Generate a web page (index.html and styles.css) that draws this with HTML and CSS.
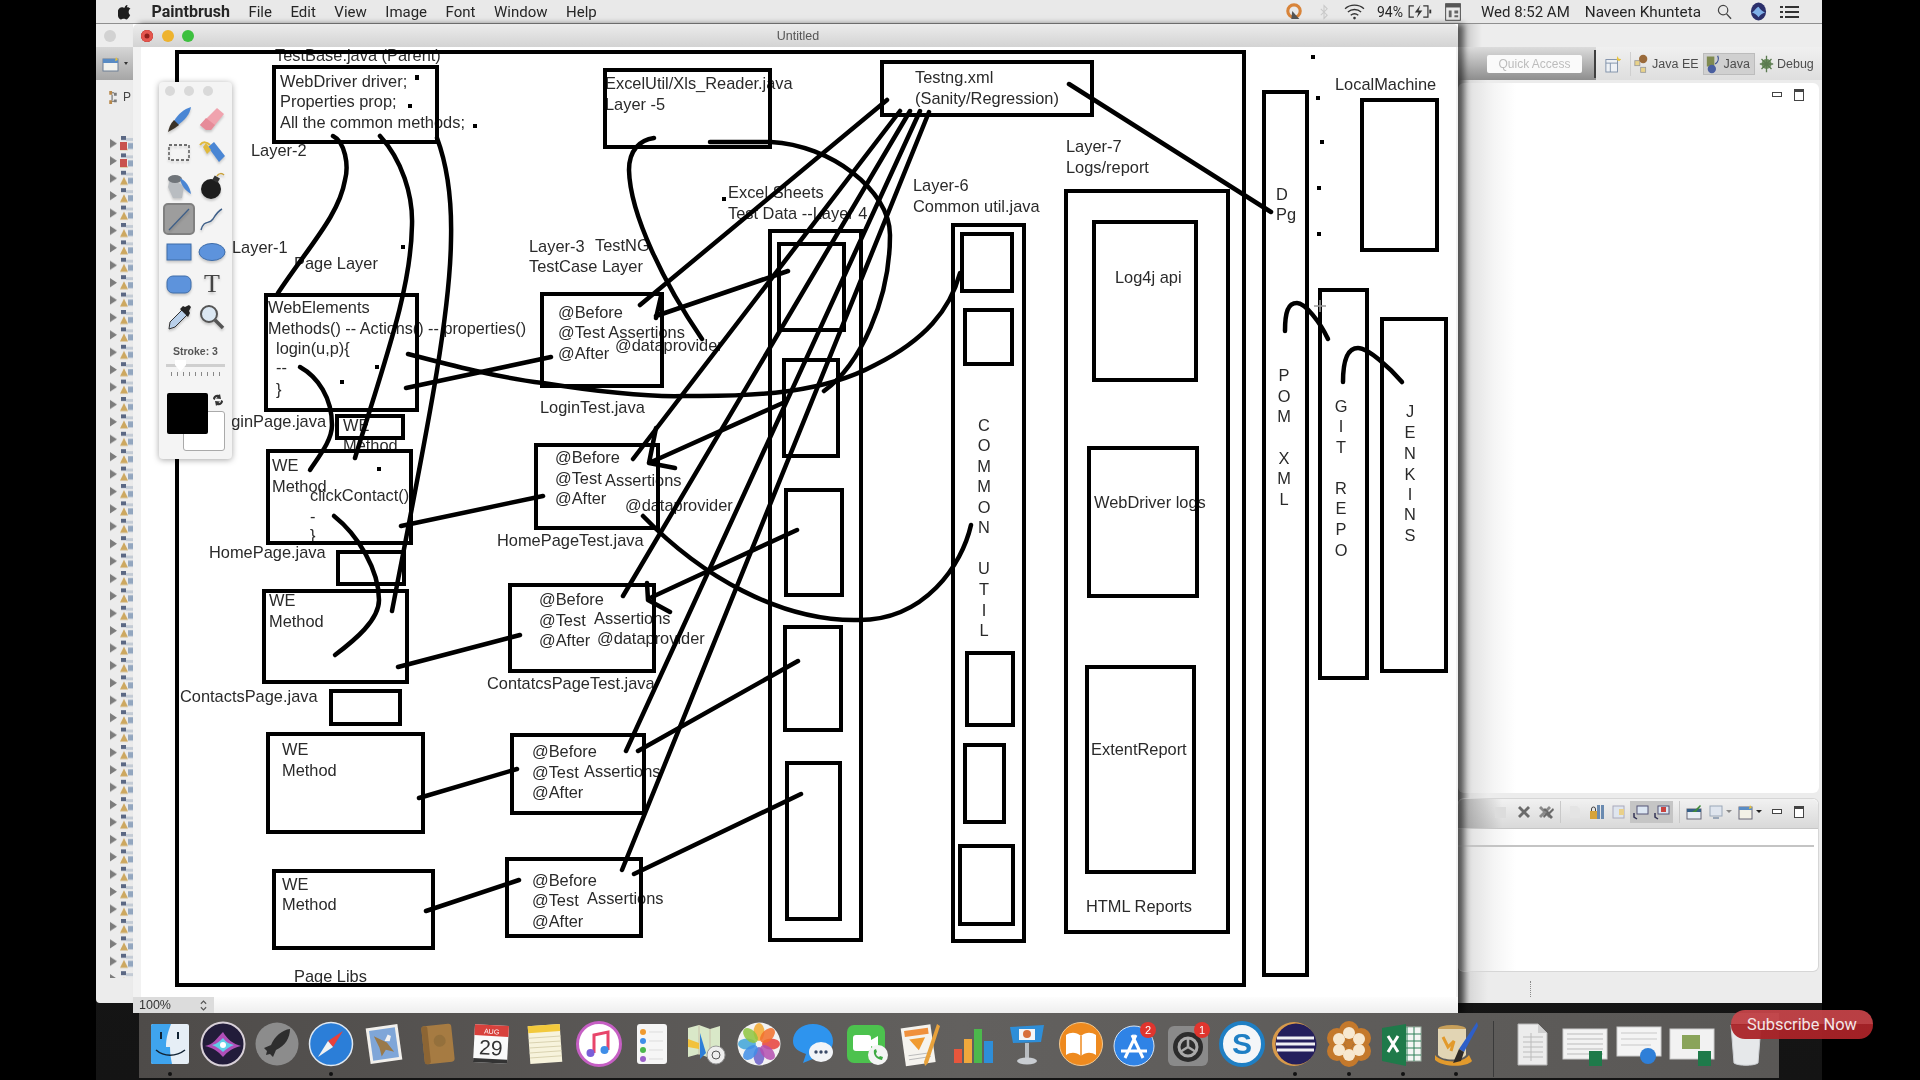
FILE: index.html
```html
<!DOCTYPE html>
<html lang="en">

<head>
    <meta charset="UTF-8">
    <title>Paintbrush - Untitled</title>
    <link rel="stylesheet" href="styles.css">
</head>

<body>
    <div class="screen">
        <!-- menu bar -->
        <header class="menubar">
            <svg class="apple" viewBox="0 0 16 19"><path d="M11.6 1c.1 1.2-.4 2.200-1 3-.7.800-1.700 1.400-2.700 1.300C7.700 4.200 8.300 3 8.900 2.300 9.600 1.600 10.700 1 11.600 1zM15 13.300c-.5 1.100-.7 1.600-1.300 2.500-.9 1.300-2 2.900-3.400 2.900-1.300 0-1.600-.8-3.300-.8s-2.100.8-3.300.8c-1.400 0-2.500-1.500-3.300-2.800C-.5 12.400-.7 8.300 .7 6.100 1.700 4.600 3.200 3.700 4.600 3.700c1.500 0 2.400.8 3.600.8s1.900-.8 3.600-.8c1.300 0 2.600.7 3.500 1.900-3.100 1.700-2.600 6.200-.3 7.700z"/></svg>
            <strong class="menu-app">Paintbrush</strong>
            <span>File</span>
            <span>Edit</span>
            <span>View</span>
            <span>Image</span>
            <span>Font</span>
            <span>Window</span>
            <span>Help</span>
            <div class="menu-right">
                <svg class="st st-cast" viewBox="0 0 18 20"><circle cx="9" cy="9" r="7" fill="none" stroke="#d8843a" stroke-width="3.500"/><path d="M7 9l8 9H6z" fill="#555"/></svg>
                <svg class="st st-bt" viewBox="0 0 10 20"><path d="M1 6l8 8-4 4V2l4 4-8 8" fill="none" stroke="#c9c9c9" stroke-width="1.300"/></svg>
                <svg class="st st-wifi" viewBox="0 0 22 18"><g fill="none" stroke="#333" stroke-width="1.400"><path d="M1 6c5.500-5 14.500-5 20 0"/><path d="M4 9.500c4-3.500 10-3.500 14 0"/><path d="M7 13c2.500-2 5.500-2 8 0"/></g><circle cx="11" cy="16" r="1.400" fill="#333"/></svg>
                <span class="st-pct">94%</span>
                <svg class="st st-batt" viewBox="0 0 26 16"><path d="M7 2H2v12h5M17 2h5v12h-5" fill="none" stroke="#333" stroke-width="1.300"/><path d="M23.500 6h2v4h-2z" fill="#333"/><path d="M14 1L8 9h4l-2 6 6-8h-4z" fill="#333"/></svg>
                <svg class="st st-cal" viewBox="0 0 17 19"><rect x=".7" y=".7" width="15.600" height="17.600" fill="none" stroke="#444"/><rect x=".7" y=".7" width="15.600" height="4" fill="#555"/><path d="M4 8h3v7H4zM10 8h4v3h-4zM10 13h4v2h-4z" fill="#666"/></svg>
                <span class="st-clock">Wed 8:52 AM</span>
                <span class="st-user">Naveen Khunteta</span>
                <svg class="st st-search" viewBox="0 0 16 17"><circle cx="6.500" cy="6.500" r="5" fill="none" stroke="#444" stroke-width="1.300"/><path d="M10.200 10.500L15 15.800" stroke="#444" stroke-width="1.500"/></svg>
                <svg class="st st-siri" viewBox="0 0 18 20"><ellipse cx="9" cy="10" rx="8" ry="9.500" fill="#2b2f6b"/><path d="M2 11c3-1 4-5 7-6 2 3 4 5 7 6-3 1-5 2-7 5-2-3-4-4-7-5z" fill="#7fb0e8"/></svg>
                <svg class="st st-list" viewBox="0 0 19 14"><g fill="#333"><rect y="1" width="3" height="2"/><rect y="6" width="3" height="2"/><rect y="11" width="3" height="2"/><rect x="5" y="1" width="14" height="2"/><rect x="5" y="6" width="14" height="2"/><rect x="5" y="11" width="14" height="2"/></g></svg>
            </div>
        </header>

        <!-- eclipse window behind -->
        <section class="eclipse">
            <div class="ec-left">
                <div class="ec-strip"><i class="ec-light"></i></div>
                <div class="ec-tools">
                    <svg class="ec-new" viewBox="0 0 20 16"><rect x="1" y="3" width="15" height="12" fill="#f3f3ee" stroke="#6d7f96"/><rect x="1" y="3" width="15" height="4" fill="#5a8cc4"/><path d="M14 1l2 3-3 1z" fill="#e8c33c"/></svg>
                    <i class="ec-new-caret"></i>
                </div>
                <div class="ec-tree">
                    <div class="ec-tree-head">
                        <svg viewBox="0 0 10 16" class="ec-pkg"><path d="M1 1h3v4H1zM1 11h3v4H1z" fill="#b8884a"/><path d="M6 3h3v3H6zM6 10h3v3H6z" fill="#7a7a7a"/><path d="M4 3h2M4 12h2M4 5v6" stroke="#555"/></svg>
                        <span>P</span>
                    </div>
                    <svg class="ec-rows" viewBox="0 0 37 842">
                        <defs>
                            <pattern id="treeRow" width="37" height="17.400" patternUnits="userSpaceOnUse">
                                <path d="M14 3l7 4.500-7 4.500z" fill="#7c7c7c"/>
                                <rect x="25" y="0" width="5" height="4" fill="#5b6884"/>
                                <rect x="30" y="2" width="7" height="3" fill="#c4ccd6"/>
                                <path d="M28 6l4 8h-8z" fill="#cda860"/>
                                <rect x="32" y="7" width="5" height="6" fill="#93a7c0"/>
                            </pattern>
                        </defs>
                        <rect width="37" height="842" fill="url(#treeRow)"/>
                        <rect x="24" y="6" width="7" height="8" fill="#c9524e"/>
                        <rect x="24" y="23" width="7" height="8" fill="#c9524e"/>
                    </svg>
                </div>
            </div>
            <div class="ec-right">
                <div class="ec-strip"></div>
                <div class="ec-tools ec-tools-right">
                    <div class="ec-quick">Quick Access</div>
                    <i class="ec-grip"></i>
                    <svg class="ec-ico" viewBox="0 0 18 20"><rect x="1" y="5" width="13" height="14" fill="#eef1f5" stroke="#7a8ca6"/><path d="M1 9h13M6 9v10" stroke="#7a8ca6"/><path d="M14 1l1.500 3 3 .5-2.500 2-3-1z" fill="#e8c33c"/></svg>
                    <i class="ec-sep"></i>
                    <div class="ec-persp">
                        <svg viewBox="0 0 18 24"><rect x="1" y="8" width="6" height="6" fill="#e8d28a" stroke="#999"/><rect x="8" y="16" width="6" height="6" fill="#e8d28a" stroke="#999"/><circle cx="11" cy="6" r="5" fill="#9a6a3a"/></svg>
                        <span>Java EE</span>
                    </div>
                    <div class="ec-persp ec-persp-on">
                        <svg viewBox="0 0 18 24"><rect x="1" y="3" width="9" height="12" fill="#7f8a50"/><circle cx="7" cy="18" r="5" fill="#4a5fa0"/><path d="M14 2c2 4 0 8-3 10" fill="none" stroke="#3a4f90" stroke-width="1.500"/></svg>
                        <span>Java</span>
                    </div>
                    <div class="ec-persp ec-persp-last">
                        <svg viewBox="0 0 18 24"><circle cx="9" cy="12" r="6" fill="#6b8f5e"/><path d="M9 2v20M1 12h16M3 6l12 12M15 6L3 18" stroke="#5b7a50" stroke-width="1.600"/></svg>
                        <span>Debug</span>
                    </div>
                </div>
                <div class="ec-panel ec-panel-top">
                    <div class="ec-winbtns">
                        <svg viewBox="0 0 10 6"><rect x=".5" y=".5" width="9" height="4" fill="#fff" stroke="#444"/></svg>
                        <svg viewBox="0 0 10 12"><rect x=".5" y=".5" width="9" height="11" fill="#fff" stroke="#444"/><rect x=".5" y=".5" width="9" height="2.500" fill="#444"/></svg>
                    </div>
                </div>
                <div class="ec-panel ec-panel-bottom">
                    <div class="ec-bar">
                        <i class="bar-ico bar-stop"></i>
                        <svg class="bar-ico" viewBox="0 0 16 16"><path d="M2 4l2-2 4 4 4-4 2 2-4 4 4 4-2 2-4-4-4 4-2-2 4-4z" fill="#6a6a6a"/></svg>
                        <svg class="bar-ico" viewBox="0 0 16 16"><path d="M1 4l2-2 4 4 4-4 2 2-4 4 4 4-2 2-4-4-4 4-2-2 4-4z" fill="#8a8a8a"/><path d="M5 6l2-2 4 4 4-4 1 2-4 4 3 3-2 2-4-4-3 3-1-2 4-4z" fill="#6a6a6a"/></svg>
                        <i class="bar-sep"></i>
                        <svg class="bar-ico" viewBox="0 0 16 16"><path d="M3 2h7l3 3v9H3z" fill="#e4e4e4"/></svg>
                        <svg class="bar-ico" viewBox="0 0 16 16"><rect x="8" y="1" width="3" height="14" fill="#6a8ab0"/><rect x="12" y="1" width="3" height="14" fill="#6a8ab0"/><rect x="1" y="7" width="7" height="8" fill="#d5a33b"/><path d="M2.500 7V5a2 2 0 014 0v2" fill="none" stroke="#444"/></svg>
                        <svg class="bar-ico" viewBox="0 0 16 16"><rect x="2" y="2" width="11" height="12" fill="#dfe5ee" stroke="#aab"/><path d="M8 5h5v6H8z" fill="#e9d08a"/></svg>
                        <div class="bar-on">
                            <svg class="bar-ico" viewBox="0 0 16 16"><rect x="4" y="2" width="11" height="8" fill="#dce6f2" stroke="#557"/><path d="M1 9v4l3 2" fill="none" stroke="#335" stroke-width="1.500"/></svg>
                            <svg class="bar-ico" viewBox="0 0 16 16"><rect x="4" y="2" width="11" height="8" fill="#dce6f2" stroke="#557"/><rect x="7" y="3" width="5" height="5" fill="#c9423e"/><path d="M1 9v4l3 2" fill="none" stroke="#335" stroke-width="1.500"/></svg>
                        </div>
                        <i class="bar-sep"></i>
                        <svg class="bar-ico" viewBox="0 0 16 16"><rect x="1" y="5" width="14" height="10" fill="#e8edf4" stroke="#667"/><rect x="1" y="5" width="14" height="3" fill="#345f88"/><path d="M6 8l3-2 5-5 1 1-5 6z" fill="#3f8a3a"/></svg>
                        <svg class="bar-ico" viewBox="0 0 16 16"><rect x="2" y="2" width="12" height="10" fill="#dfe5ee" stroke="#9aa7b8"/><rect x="5" y="13" width="6" height="2" fill="#9aa7b8"/></svg>
                        <i class="bar-caret"></i>
                        <svg class="bar-ico" viewBox="0 0 16 16"><rect x="1" y="3" width="13" height="12" fill="#f3f1e6" stroke="#667"/><rect x="1" y="3" width="13" height="3" fill="#5a8cc4"/><path d="M12 1l2 3-3 1z" fill="#e8c33c"/></svg>
                        <i class="bar-caret bar-caret-dark"></i>
                        <div class="ec-winbtns ec-winbtns-bar">
                            <svg viewBox="0 0 10 6"><rect x=".5" y=".5" width="9" height="4" fill="#fff" stroke="#444"/></svg>
                            <svg viewBox="0 0 10 12"><rect x=".5" y=".5" width="9" height="11" fill="#fff" stroke="#444"/><rect x=".5" y=".5" width="9" height="2.500" fill="#444"/></svg>
                        </div>
                    </div>
                    <div class="ec-bar-line"></div>
                </div>
                <div class="ec-status"><i class="ec-sash"></i></div>
            </div>
        </section>

        <!-- paintbrush window -->
        <section class="paint">
            <div class="paint-title">
                <i class="light light-red"></i>
                <i class="light light-yellow"></i>
                <i class="light light-green"></i>
                <span class="paint-name">Untitled</span>
            </div>
            <div class="paint-body">
                <svg class="diagram" viewBox="141 47 1315 950">
                    <g class="dg-txt">
                        <text x="275" y="61">TestBase.java (Parent)</text>
                        <text x="280" y="87">WebDriver driver;</text>
                        <text x="280" y="107">Properties prop;</text>
                        <text x="280" y="128">All the common methods;</text>
                        <text x="605" y="89">ExcelUtil/Xls_Reader.java</text>
                        <text x="605" y="110">Layer -5</text>
                        <text x="915" y="83">Testng.xml</text>
                        <text x="915" y="104">(Sanity/Regression)</text>
                        <text x="251" y="156">Layer-2</text>
                        <text x="232" y="253">Layer-1</text>
                        <text x="294" y="269">Page Layer</text>
                        <text x="529" y="252">Layer-3</text>
                        <text x="595" y="251">TestNG</text>
                        <text x="529" y="272">TestCase Layer</text>
                        <text x="728" y="198">Excel Sheets</text>
                        <text x="728" y="219">Test Data --Layer 4</text>
                        <text x="913" y="191">Layer-6</text>
                        <text x="913" y="212">Common util.java</text>
                        <text x="1066" y="152">Layer-7</text>
                        <text x="1066" y="173">Logs/report</text>
                        <text x="1335" y="90">LocalMachine</text>

                        <text x="268" y="313">WebElements</text>
                        <text x="268" y="334" class="dg-tight">Methods() -- Actions() -- properties()</text>
                        <text x="276" y="354">login(u,p){</text>
                        <text x="276" y="373">--</text>
                        <text x="276" y="395">}</text>
                        <text x="213" y="427">LoginPage.java</text>
                        <text x="343" y="431">WE</text>
                        <text x="343" y="451">Method</text>
                        <text x="272" y="471">WE</text>
                        <text x="272" y="492">Method</text>
                        <text x="310" y="501">clickContact()</text>
                        <text x="310" y="522">-</text>
                        <text x="310" y="541">}</text>
                        <text x="209" y="558">HomePage.java</text>
                        <text x="269" y="606">WE</text>
                        <text x="269" y="627">Method</text>
                        <text x="180" y="702">ContactsPage.java</text>
                        <text x="282" y="755">WE</text>
                        <text x="282" y="776">Method</text>
                        <text x="282" y="890">WE</text>
                        <text x="282" y="910">Method</text>
                        <text x="294" y="982">Page Libs</text>

                        <text x="558" y="318">@Before</text>
                        <text x="558" y="338">@Test Assertions</text>
                        <text x="558" y="359">@After</text>
                        <text x="615" y="351">@dataprovider</text>
                        <text x="540" y="413">LoginTest.java</text>
                        <text x="555" y="463">@Before</text>
                        <text x="555" y="484">@Test</text>
                        <text x="605" y="486">Assertions</text>
                        <text x="555" y="504">@After</text>
                        <text x="625" y="511">@dataprovider</text>
                        <text x="497" y="546">HomePageTest.java</text>
                        <text x="539" y="605">@Before</text>
                        <text x="539" y="626">@Test</text>
                        <text x="594" y="624">Assertions</text>
                        <text x="539" y="646">@After</text>
                        <text x="597" y="644">@dataprovider</text>
                        <text x="487" y="689">ContatcsPageTest.java</text>
                        <text x="532" y="757">@Before</text>
                        <text x="532" y="778">@Test</text>
                        <text x="584" y="777">Assertions</text>
                        <text x="532" y="798">@After</text>
                        <text x="532" y="886">@Before</text>
                        <text x="532" y="906">@Test</text>
                        <text x="587" y="904">Assertions</text>
                        <text x="532" y="927">@After</text>

                        <text x="1115" y="283">Log4j api</text>
                        <text x="1094" y="508">WebDriver logs</text>
                        <text x="1091" y="755">ExtentReport</text>
                        <text x="1086" y="912">HTML Reports</text>
                        <text x="1276" y="200">D</text>
                        <text x="1276" y="220">Pg</text>
                    </g>
                    <g class="dg-txt dg-col">
                        <text x="984" y="431">C</text><text x="984" y="451">O</text><text x="984" y="472">M</text><text x="984" y="492">M</text><text x="984" y="513">O</text><text x="984" y="533">N</text>
                        <text x="984" y="574">U</text><text x="984" y="595">T</text><text x="984" y="616">I</text><text x="984" y="636">L</text>
                        <text x="1284" y="381">P</text><text x="1284" y="402">O</text><text x="1284" y="422">M</text><text x="1284" y="464">X</text><text x="1284" y="484">M</text><text x="1284" y="505">L</text>
                        <text x="1341" y="412">G</text><text x="1341" y="432">I</text><text x="1341" y="453">T</text><text x="1341" y="494">R</text><text x="1341" y="514">E</text><text x="1341" y="535">P</text><text x="1341" y="556">O</text>
                        <text x="1410" y="417">J</text><text x="1410" y="438">E</text><text x="1410" y="459">N</text><text x="1410" y="480">K</text><text x="1410" y="500">I</text><text x="1410" y="520">N</text><text x="1410" y="541">S</text>
                    </g>

                    <g class="dg-box">
                        <rect x="177" y="52" width="1067" height="933"/>
                        <rect x="274" y="67" width="163" height="75"/>
                        <rect x="605" y="70" width="165" height="77"/>
                        <rect x="882" y="62" width="210" height="53"/>
                        <rect x="542" y="294" width="120" height="92"/>
                        <rect x="536" y="445" width="122" height="83"/>
                        <rect x="510" y="585" width="144" height="86"/>
                        <rect x="512" y="735" width="132" height="78"/>
                        <rect x="507" y="859" width="134" height="77"/>
                        <rect x="266" y="295" width="151" height="115"/>
                        <rect x="337" y="416" width="66" height="22"/>
                        <rect x="268" y="451" width="143" height="92"/>
                        <rect x="338" y="552" width="66" height="32"/>
                        <rect x="264" y="591" width="143" height="91"/>
                        <rect x="331" y="691" width="69" height="33"/>
                        <rect x="268" y="734" width="155" height="98"/>
                        <rect x="274" y="871" width="159" height="77"/>
                        <rect x="770" y="231" width="91" height="709"/>
                        <rect x="779" y="244" width="65" height="86"/>
                        <rect x="784" y="360" width="54" height="96"/>
                        <rect x="786" y="490" width="56" height="105"/>
                        <rect x="785" y="627" width="56" height="103"/>
                        <rect x="787" y="763" width="53" height="156"/>
                        <rect x="953" y="225" width="71" height="716"/>
                        <rect x="962" y="234" width="50" height="57"/>
                        <rect x="965" y="310" width="47" height="54"/>
                        <rect x="967" y="653" width="46" height="72"/>
                        <rect x="965" y="745" width="39" height="77"/>
                        <rect x="960" y="846" width="53" height="78"/>
                        <rect x="1066" y="191" width="162" height="741"/>
                        <rect x="1094" y="222" width="102" height="158"/>
                        <rect x="1089" y="448" width="108" height="148"/>
                        <rect x="1087" y="667" width="107" height="205"/>
                        <rect x="1264" y="92" width="43" height="883"/>
                        <rect x="1362" y="100" width="75" height="150"/>
                        <rect x="1320" y="290" width="47" height="388"/>
                        <rect x="1382" y="319" width="64" height="352"/>
                    </g>

                    <g class="dg-line">
                        <!-- curves -->
                        <path d="M333 136C345 142 349 165 345 180C339 215 310 245 278 293"/>
                        <path d="M380 136C402 160 413 195 412 225C411 290 385 360 355 458"/>
                        <path d="M437 138C447 165 452 200 451 240C450 320 425 440 392 611"/>
                        <path d="M300 367C318 377 332 398 332 425C332 440 320 455 310 470"/>
                        <path d="M334 516C358 535 379 570 379 600C379 620 355 640 335 655"/>
                        <path d="M408 354C450 365 500 378 543 383C600 392 650 397 684 396C760 397 825 392 875 365C925 340 950 310 960 273"/>
                        <path d="M654 138C640 140 629 150 629 170C630 215 665 285 702 339"/>
                        <path d="M710 142L771 142C830 145 890 190 890 235C890 300 860 365 824 391"/>
                        <path d="M971 525C962 565 925 620 859 620C780 622 700 575 643 516"/>
                        <path d="M1285 331C1285 312 1288 303 1297 303C1305 303 1320 322 1328 339"/>
                        <path d="M1343 382C1343 360 1348 348 1358 348C1368 348 1390 368 1402 382"/>
                        <!-- testng fan -->
                        <path d="M887 100L640 305"/>
                        <path d="M900 111L633 459"/>
                        <path d="M910 111L623 596"/>
                        <path d="M920 111L626 751"/>
                        <path d="M929 112L622 870"/>
                        <path d="M1069 84L1271 212"/>
                        <!-- excel arrows -->
                        <path d="M788 271L656 316M661 296L656 318"/>
                        <path d="M785 402L649 463M656 428L649 463L675 468"/>
                        <path d="M797 530L652 597M647 583L648 600L670 612"/>
                        <path d="M798 661L638 751"/>
                        <path d="M801 794L634 874"/>
                        <!-- test to page -->
                        <path d="M406 388L551 357"/>
                        <path d="M401 526L543 496"/>
                        <path d="M398 667L520 635"/>
                        <path d="M419 798L517 769"/>
                        <path d="M426 911L519 880"/>
                    </g>

                    <g class="dg-dot">
                        <rect x="415" y="75" width="4" height="5"/>
                        <rect x="408" y="104" width="4" height="4"/>
                        <rect x="473" y="124" width="4" height="4"/>
                        <rect x="401" y="245" width="4" height="4"/>
                        <rect x="375" y="365" width="4" height="4"/>
                        <rect x="340" y="380" width="4" height="4"/>
                        <rect x="377" y="467" width="4" height="4"/>
                        <rect x="722" y="197" width="4" height="4"/>
                        <rect x="1311" y="55" width="4" height="4"/>
                        <rect x="1316" y="96" width="4" height="4"/>
                        <rect x="1320" y="140" width="4" height="4"/>
                        <rect x="1317" y="186" width="4" height="4"/>
                        <rect x="1317" y="232" width="4" height="4"/>
                    </g>
                    <path class="dg-cursor" d="M1320 300v12M1314 306h12"/>
                </svg>
            </div>
            <div class="paint-foot">
                <div class="zoom-box">100%
                    <svg viewBox="0 0 8 14"><path d="M1 5l3-3 3 3M1 9l3 3 3-3" fill="none" stroke="#555" stroke-width="1.300"/></svg>
                </div>
            </div>

            <!-- tool palette -->
            <aside class="palette">
                <div class="pal-lights"><i></i><i></i><i></i></div>
                <div class="pal-grid">
                    <svg class="tool" viewBox="0 0 28 28"><path d="M26 1c-1 7-6 13-13 18l-4-4C13 8 19 3 26 1z" fill="#4a86d4"/><path d="M9 14l5 5-4 3-7 4c1-4 2-8 6-12z" fill="#3a3228"/></svg>
                    <svg class="tool" viewBox="0 0 28 28"><path d="M19 2l7 6-13 16H8l-6-5z" fill="#f0a3ae"/><path d="M2 19l6 5h5l4-5-9-7z" fill="#e68b98"/></svg>
                    <svg class="tool" viewBox="0 0 28 28"><rect x="4" y="6" width="20" height="15" fill="none" stroke="#444" stroke-width="1.300" stroke-dasharray="3 2"/></svg>
                    <svg class="tool" viewBox="0 0 28 28"><path d="M10 8l6-5 11 14-6 6z" fill="#4a86d4"/><path d="M2 6c3-4 7-3 10 0" fill="none" stroke="#e0b93c" stroke-width="2"/><path d="M8 4l5 7-4 4-4-7z" fill="#e0b93c"/></svg>
                    <svg class="tool" viewBox="0 0 28 28"><path d="M5 6l14 8-2 12H8L3 15z" fill="#b9bdc1"/><ellipse cx="10" cy="7" rx="7" ry="4" fill="#70757a"/><path d="M15 6c6 3 10 9 11 16-5-3-10-8-11-16z" fill="#4a86d4"/></svg>
                    <svg class="tool" viewBox="0 0 28 28"><circle cx="13" cy="17" r="10" fill="#1d1d1d"/><rect x="15" y="4" width="6" height="5" transform="rotate(30 17 7)" fill="#333"/><path d="M19 4c2-3 5-3 7-1" fill="none" stroke="#c9a13a" stroke-width="1.500"/></svg>
                    <div class="tool-on"><svg class="tool" viewBox="0 0 28 28"><path d="M4 25L24 4" stroke="#3e5f88" stroke-width="1.300"/></svg></div>
                    <svg class="tool" viewBox="0 0 28 28"><path d="M3 25c3-11 8-5 12-11 3-5 5-8 9-10" fill="none" stroke="#3e5f88" stroke-width="1.400"/></svg>
                    <svg class="tool" viewBox="0 0 28 28"><rect x="2" y="6" width="24" height="16" fill="#5d93dc" stroke="#3e6ca8"/></svg>
                    <svg class="tool" viewBox="0 0 28 28"><ellipse cx="14" cy="14" rx="13" ry="8.500" fill="#5d93dc" stroke="#3e6ca8"/></svg>
                    <svg class="tool" viewBox="0 0 28 28"><rect x="2" y="6" width="24" height="17" rx="6" fill="#5d93dc" stroke="#3e6ca8"/></svg>
                    <div class="tool tool-t">T</div>
                    <svg class="tool" viewBox="0 0 28 28"><path d="M5 19L17 7l5 5-12 12-6 2z" fill="#b9d0ea" stroke="#333"/><path d="M15 6l8 8 2-4-1-2 2-4-2-2-4 2-2-1z" fill="#222"/></svg>
                    <svg class="tool" viewBox="0 0 28 28"><circle cx="11" cy="11" r="8" fill="#dbe7f2" stroke="#555" stroke-width="2"/><path d="M17 17l8 8" stroke="#555" stroke-width="3.500"/></svg>
                </div>
                <div class="pal-stroke">Stroke: 3</div>
                <div class="pal-slider"><i class="pal-thumb"></i></div>
                <div class="pal-ticks"></div>
                <div class="pal-swatch">
                    <i class="sw-back"></i>
                    <i class="sw-front"></i>
                    <svg class="sw-swap" viewBox="0 0 14 14"><path d="M2 6c0-3 3-5 6-4l1-1 1 5-5-.5 1.500-1.500C5 3.500 4 5 4 7zM12 8c0 3-3 5-6 4l-1 1-1-5 5 .5-1.500 1.500c1.500.5 2.500-1 2.500-3z" fill="#333"/></svg>
                </div>
            </aside>
        </section>

        <!-- dock -->
        <footer class="dock">
            <div class="dock-app is-open"><svg viewBox="0 0 46 46"><rect x="4" y="3" width="38" height="40" rx="2" fill="#e6eef6"/><path d="M4 5a2 2 0 012-2h18c-3 8-5 14-5 23h4c0 7 1 12 2 17H6a2 2 0 01-2-2z" fill="#3fa4ee"/><path d="M14 11v7M31 11v7" stroke="#123" stroke-width="2"/><path d="M9 29c8 7 20 7 29 0" fill="none" stroke="#123" stroke-width="1.500"/></svg></div>
            <div class="dock-app"><svg viewBox="0 0 46 46"><circle cx="23" cy="23" r="21.500" fill="#221c3a" stroke="#d8d0d8" stroke-width="2"/><path d="M5 25c8-1 12-8 18-14 4 7 10 12 18 14-8 2-13 5-18 11-5-6-10-9-18-11z" fill="#b04fb8"/><path d="M12 24c5-1 8-4 11-7 3 4 6 6 11 7-5 2-8 4-11 7-3-3-6-5-11-7z" fill="#5fd0e8"/><circle cx="23" cy="24" r="3" fill="#fff"/></svg></div>
            <div class="dock-app"><svg viewBox="0 0 46 46"><circle cx="23" cy="23" r="21.500" fill="#8c8c8c"/><path d="M36 8c-8 1-15 7-19 16l-7 3 3 3-1 4 4-1 3 3 3-7c9-4 14-12 14-21z" fill="#2e2e2e"/></svg></div>
            <div class="dock-app is-open"><svg viewBox="0 0 46 46"><circle cx="23" cy="23" r="21.500" fill="#2b7ed8" stroke="#dfe8f2" stroke-width="1.500"/><path d="M35 10L20 20l5 6z" fill="#e8413c"/><path d="M10 36l15-10-5-6z" fill="#f2f2f2"/></svg></div>
            <div class="dock-app"><svg viewBox="0 0 46 46"><g transform="rotate(-8 23 23)"><rect x="7" y="5" width="32" height="36" fill="#f2f0ec"/><rect x="10" y="8" width="26" height="30" fill="#7fa6d8"/><path d="M14 14l12 8 6 10-8-3-5 6-1-9z" fill="#9a7a4a"/><path d="M24 20l4-6 3 2-2 5z" fill="#f2f2f2"/></g></svg></div>
            <div class="dock-app"><svg viewBox="0 0 46 46"><g transform="rotate(-6 23 23)"><rect x="8" y="4" width="30" height="38" rx="3" fill="#a67b42"/><rect x="8" y="4" width="6" height="38" rx="2" fill="#8c6534"/><circle cx="25" cy="20" r="6" fill="#94703c"/></g></svg></div>
            <div class="dock-app"><svg viewBox="0 0 46 46"><g transform="rotate(3 23 23)"><rect x="6" y="4" width="34" height="38" fill="#fafafa"/><rect x="6" y="4" width="34" height="11" fill="#d8413c"/><rect x="6" y="38" width="34" height="4" fill="#333"/><text class="cal-m" x="23" y="13">AUG</text><text class="cal-d" x="23" y="34">29</text></g></svg></div>
            <div class="dock-app"><svg viewBox="0 0 46 46"><g transform="rotate(-4 23 23)"><rect x="7" y="4" width="32" height="38" fill="#f7f3dc"/><rect x="7" y="4" width="32" height="7" fill="#f2c93c"/><path d="M7 16h32M7 21h32M7 26h32M7 31h32M7 36h32" stroke="#d9d2b0"/></g></svg></div>
            <div class="dock-app"><svg viewBox="0 0 46 46"><circle cx="23" cy="23" r="21.500" fill="#fff" stroke="#c65fc4" stroke-width="3"/><path d="M18 32V14l14-3v18" fill="none" stroke="#e8456a" stroke-width="3"/><circle cx="14.500" cy="32" r="4" fill="#7a5fd8"/><circle cx="28.500" cy="29" r="4" fill="#3f8ee8"/></svg></div>
            <div class="dock-app"><svg viewBox="0 0 46 46"><rect x="8" y="3" width="30" height="40" rx="3" fill="#f6f6f6"/><circle cx="14" cy="11" r="3" fill="#f09a30"/><circle cx="14" cy="20" r="3" fill="#3f8ee8"/><circle cx="14" cy="29" r="3" fill="#4cb84c"/><circle cx="14" cy="38" r="3" fill="#9a5fc8"/><path d="M20 11h14M20 20h14M20 29h14M20 38h14" stroke="#ddd"/></svg></div>
            <div class="dock-app"><svg viewBox="0 0 46 46"><path d="M5 7l11-3 11 4 10-3v29l-10 3-11-4-11 3z" fill="#d9e8c8"/><path d="M16 4v30M27 8v30" stroke="#c9c0a8"/><path d="M17 12l6 20-6 6z" fill="#2e7fd8"/><path d="M5 18l11 4v6L5 26z" fill="#f2c23c"/><circle cx="33" cy="34" r="9" fill="#eee" stroke="#999"/><circle cx="33" cy="34" r="4" fill="none" stroke="#555"/></svg></div>
            <div class="dock-app"><svg viewBox="0 0 46 46"><circle cx="23" cy="23" r="21.500" fill="#f2f2f2"/><g fill-opacity=".85"><ellipse cx="23" cy="11" rx="5.500" ry="9" fill="#f3a92f"/><ellipse cx="23" cy="35" rx="5.500" ry="9" fill="#6b5fc8"/><ellipse cx="11" cy="23" rx="9" ry="5.500" fill="#3fa4d8"/><ellipse cx="35" cy="23" rx="9" ry="5.500" fill="#e8413c"/><ellipse cx="14.500" cy="14.500" rx="5.500" ry="9" transform="rotate(-45 14.500 14.500)" fill="#8ec63f"/><ellipse cx="31.500" cy="14.500" rx="5.500" ry="9" transform="rotate(45 31.500 14.500)" fill="#f2702c"/><ellipse cx="14.500" cy="31.500" rx="5.500" ry="9" transform="rotate(45 14.500 31.500)" fill="#3f8ee8"/><ellipse cx="31.500" cy="31.500" rx="5.500" ry="9" transform="rotate(-45 31.500 31.500)" fill="#b44fb0"/></g></svg></div>
            <div class="dock-app"><svg viewBox="0 0 46 46"><path d="M23 3c11 0 20 7 20 17 0 6-3 11-8 13l-22 9 3-9C7 30 3 26 3 20 3 10 12 3 23 3z" fill="#2e94ee"/><ellipse cx="31" cy="31" rx="12" ry="10" fill="#f2f4f8"/><circle cx="26" cy="31" r="1.700" fill="#3a4a68"/><circle cx="31" cy="31" r="1.700" fill="#3a4a68"/><circle cx="36" cy="31" r="1.700" fill="#3a4a68"/></svg></div>
            <div class="dock-app"><svg viewBox="0 0 46 46"><rect x="3" y="4" width="38" height="38" rx="7" fill="#4cc24e"/><rect x="9" y="14" width="18" height="16" rx="3" fill="#fff"/><path d="M27 19l7-4v14l-7-4z" fill="#fff"/><circle cx="34" cy="34" r="10" fill="#f4f4f4"/><path d="M30 29c-1 5 2 9 8 10l1-3-3-1-1 1c-2-1-3-2-3-4l1-1-1-3z" fill="#3faa44"/></svg></div>
            <div class="dock-app"><svg viewBox="0 0 46 46"><g transform="rotate(-8 23 23)"><rect x="6" y="5" width="30" height="38" fill="#f5f3ee"/><rect x="9" y="8" width="24" height="6" fill="#f0903c"/><path d="M13 17h16l-8 12z" fill="#f09a30"/><path d="M10 33h22M10 37h22" stroke="#bbb"/></g><path d="M40 3l3 2-12 37-3 3-1-4z" fill="#e8a23c"/></svg></div>
            <div class="dock-app"><svg viewBox="0 0 46 46"><rect x="3" y="28" width="8" height="14" fill="#e8563c"/><rect x="13" y="18" width="8" height="24" fill="#f0a83c"/><rect x="23" y="8" width="8" height="34" fill="#4cb84c"/><rect x="33" y="20" width="9" height="22" fill="#2e8ed8"/></svg></div>
            <div class="dock-app"><svg viewBox="0 0 46 46"><path d="M6 6l34-2-3 17-28 1z" fill="#2e8ed8"/><rect x="15" y="8" width="16" height="11" fill="#f4f6f8"/><circle cx="23" cy="13" r="4" fill="#d8703c"/><rect x="21" y="22" width="4" height="15" fill="#b8bcc0"/><ellipse cx="23" cy="40" rx="10" ry="3.500" fill="#c9cdd2"/></svg></div>
            <div class="dock-app"><svg viewBox="0 0 46 46"><circle cx="23" cy="23" r="21.500" fill="#ee8a1f" stroke="#f2c890"/><path d="M8 14c5-3 10-3 15 1 5-4 10-4 15-1v20c-5-3-10-3-15 1-5-4-10-4-15-1z" fill="#fff"/><path d="M23 15v20" stroke="#ee8a1f" stroke-width="1.500"/></svg></div>
            <div class="dock-app"><svg viewBox="0 0 46 46"><circle cx="23" cy="25" r="20" fill="#2f83e6" stroke="#d6e4f4"/><path d="M14 37l11-23M32 37L21 14M10 30h26" stroke="#fff" stroke-width="3" fill="none"/><circle cx="37" cy="9" r="8" fill="#e0352e"/><text class="badge-n" x="37" y="13">2</text></svg></div>
            <div class="dock-app"><svg viewBox="0 0 46 46"><rect x="3" y="5" width="40" height="40" rx="6" fill="#8a8a8a"/><circle cx="23" cy="26" r="15" fill="#2c2c2c"/><circle cx="23" cy="26" r="9" fill="none" stroke="#aaa" stroke-width="3"/><path d="M23 26v-9M23 26l8 5M23 26l-8 5" stroke="#aaa" stroke-width="2.500"/><circle cx="37" cy="9" r="8" fill="#e0352e"/><text class="badge-n" x="37" y="13">1</text></svg></div>
            <div class="dock-app"><svg viewBox="0 0 46 46"><circle cx="23" cy="23" r="21" fill="#f4f6f8" stroke="#1f7fc4" stroke-width="4"/><text class="skype-s" x="23" y="33">S</text></svg></div>
            <div class="dock-app is-open"><svg viewBox="0 0 46 46"><circle cx="22" cy="23" r="22" fill="#d89a4a"/><circle cx="24" cy="23" r="20.500" fill="#241f5c"/><path d="M5 17h37M4 23h39M5 29h37" stroke="#f0f0f4" stroke-width="3"/></svg></div>
            <div class="dock-app is-open"><svg viewBox="0 0 46 46"><g fill="#c4792c"><circle cx="23" cy="10" r="10"/><circle cx="23" cy="36" r="10"/><circle cx="11" cy="17" r="10"/><circle cx="35" cy="17" r="10"/><circle cx="11" cy="30" r="10"/><circle cx="35" cy="30" r="10"/></g><g fill="#f7e8d0"><circle cx="23" cy="12" r="6"/><circle cx="23" cy="34" r="6"/><circle cx="13" cy="18" r="6"/><circle cx="33" cy="18" r="6"/><circle cx="13" cy="29" r="6"/><circle cx="33" cy="29" r="6"/></g><circle cx="23" cy="23" r="4" fill="#c4792c"/></svg></div>
            <div class="dock-app is-open"><svg viewBox="0 0 46 46"><rect x="21" y="6" width="21" height="34" fill="#f4f6f4" stroke="#9cb3a4"/><path d="M21 13h21M21 20h21M21 27h21M21 34h21M28 6v34M35 6v34" stroke="#2e8058"/><path d="M3 7l24-4v42L3 40z" fill="#1f7a4a"/><path d="M9 15l10 16M19 15L9 31" stroke="#fff" stroke-width="3"/></svg></div>
            <div class="dock-app is-open"><svg viewBox="0 0 46 46"><ellipse cx="19" cy="8" rx="14" ry="4" fill="#c8a05a"/><path d="M5 8h28v26c-4 6-24 6-28 0z" fill="#e2d5b4"/><path d="M10 16l5 10 6-6-3 10" fill="none" stroke="#e29a2c" stroke-width="3"/><path d="M2 34c6 8 28 9 34 0l3 6c-6 7-30 6-37-1z" fill="#e29a2c"/><path d="M44 1l1 4-14 26-5-3z" fill="#2e5fc8"/><path d="M26 28l5 3-3 9-8 2z" fill="#2e2a26"/></svg></div>
            <i class="dock-sep"></i>
            <div class="dock-app"><svg viewBox="0 0 46 46"><path d="M9 3h20l9 9v32H9z" fill="#ececec" stroke="#b5b5b5"/><path d="M29 3v9h9z" fill="#cfcfcf"/><path d="M14 16h20M14 21h20M14 26h20M14 31h20M14 36h20M22 12v28" stroke="#bcbcbc"/></svg></div>
            <div class="dock-app"><svg viewBox="0 0 46 46"><rect x="1" y="8" width="44" height="30" fill="#f2f2f2" stroke="#ccc"/><path d="M5 13h36M5 18h36M5 23h36M5 28h36M5 33h36" stroke="#bbb"/><rect x="27" y="30" width="13" height="15" fill="#1f7a4a"/></svg></div>
            <div class="dock-app"><svg viewBox="0 0 46 46"><rect x="1" y="6" width="44" height="29" fill="#f4f4f4" stroke="#ccc"/><path d="M5 12h36M5 18h36M5 24h30" stroke="#c8c8c8"/><circle cx="32" cy="35" r="8" fill="#2e7fd8"/></svg></div>
            <div class="dock-app"><svg viewBox="0 0 46 46"><rect x="1" y="8" width="44" height="30" fill="#f2f2f2" stroke="#ccc"/><rect x="13" y="14" width="18" height="14" fill="#8aa45a"/><rect x="29" y="30" width="13" height="15" fill="#1f7a4a"/></svg></div>
            <div class="dock-app"><svg viewBox="0 0 46 46"><path d="M8 4h30l-3 38c-4 3-20 3-24 0z" fill="#e6e8ea" stroke="#cfd2d6"/></svg></div>
        </footer>
    </div>

    <div class="subscribe">Subscribe Now</div>
</body>

</html>
```
FILE: styles.css
```css
* {
    margin: 0;
    padding: 0;
    box-sizing: border-box;
}

html, body {
    width: 1920px;
    height: 1080px;
    overflow: hidden;
    background-color: #000;
}

body {
    position: relative;
    font-family: "Liberation Sans", Arial, sans-serif;
}

svg {
    display: block;
}

.screen {
    position: relative;
    width: 1726px;
    height: 1080px;
    margin-left: 96px;
    overflow: hidden;
    background: linear-gradient(#1c1c1c, #141414);
    filter: blur(0.4px);
}

/* menu bar */

.menubar {
    display: flex;
    align-items: center;
    height: 24px;
    padding-left: 22px;
    gap: 18.500px;
    background-color: #e9e9e9;
    border-bottom: 1px solid #8f8f8f;
    font-family: Roboto, sans-serif;
    font-size: 15px;
    color: #262626;
}

.apple {
    width: 13px;
    height: 16px;
    margin-right: 2px;
    fill: #1e1e1e;
}

.menu-app {
    font-weight: 700;
    font-size: 16px;
    margin-right: 0;
}

.menu-right {
    display: flex;
    align-items: center;
    margin-left: auto;
    height: 100%;
    padding-right: 23px;
}

.st-cast { width: 16px; height: 18px; margin-right: 18px; }
.st-bt { width: 8px; height: 18px; margin-right: 16px; }
.st-wifi { width: 21px; height: 17px; margin-right: 12px; }
.st-pct { font-size: 14px; width: 29px; }
.st-batt { width: 25px; height: 15px; margin-left: 1px; margin-right: 13px; }
.st-cal { width: 16px; height: 18px; margin-right: 20px; }
.st-clock { margin-right: 15px; }
.st-user { margin-right: 16px; font-size: 15.300px; }
.st-search { width: 15px; height: 16px; margin-right: 18px; }
.st-siri { width: 17px; height: 19px; margin-right: 13px; }
.st-list { width: 19px; height: 14px; }

/* eclipse behind */

.eclipse {
    position: absolute;
    left: 0;
    top: 24px;
    width: 1726px;
    height: 979px;
    display: flex;
    justify-content: space-between;
    border-radius: 5px 5px 4px 4px;
    background-color: #ececec;
}

.ec-left {
    width: 37px;
    display: flex;
    flex-direction: column;
}

.ec-right {
    width: 364px;
    display: flex;
    flex-direction: column;
    background: linear-gradient(90deg, #8a8a8a 0, #d9d9d9 12px, #ececec 30px);
}

.ec-strip {
    position: relative;
    height: 23px;
    background-color: #ededed;
}

.ec-right .ec-strip {
    background: linear-gradient(90deg, #bdbdbd 0, #ededed 24px);
}

.ec-light {
    position: absolute;
    left: 8px;
    top: 6px;
    width: 12px;
    height: 12px;
    border-radius: 50%;
    background-color: #d2d2d2;
}

.ec-tools {
    height: 33px;
    display: flex;
    align-items: center;
    background: linear-gradient(#d6d6d6, #a6a6a6);
}

.ec-new {
    width: 20px;
    height: 16px;
    margin-left: 6px;
}

.ec-new-caret {
    margin-left: 2px;
    border: 2.500px solid transparent;
    border-top: 3px solid #333;
    border-bottom: none;
}

.ec-tree {
    flex: 1;
    background-color: #ececec;
    border-radius: 6px 0 0 6px;
    padding-top: 8px;
}

.ec-tree-head {
    display: flex;
    align-items: center;
    gap: 5px;
    height: 18px;
    padding-left: 12px;
    font-size: 12px;
    color: #444;
}

.ec-pkg {
    width: 10px;
    height: 15px;
}

.ec-rows {
    width: 37px;
    height: 842px;
    margin-top: 30px;
}

.ec-tools-right {
    padding-left: 29px;
    background: linear-gradient(#dcdcdc, #8e8e8e) 0 0 / 138px 100% no-repeat, linear-gradient(#f0f0f0, #dedede);
}

.ec-quick {
    flex: none;
    width: 95px;
    height: 18px;
    border-radius: 2px;
    background-color: #fafafa;
    color: #bcbcbc;
    font-size: 12px;
    line-height: 18px;
    text-align: center;
}

.ec-grip {
    flex: none;
    width: 5px;
    height: 28px;
    margin-left: 9px;
    border-right: 2px solid #3f3f3f;
}

.ec-ico {
    flex: none;
    width: 16px;
    height: 20px;
    margin-left: 9px;
}

.ec-sep {
    flex: none;
    width: 1px;
    height: 24px;
    margin-left: 9px;
    background-color: #cfcfcf;
}

.ec-persp {
    display: flex;
    flex: none;
    align-items: center;
    gap: 3px;
    height: 22px;
    padding: 0 4px 0 3px;
    font-size: 12.500px;
    white-space: nowrap;
    color: #4d4d4d;
}

.ec-persp svg {
    width: 15px;
    height: 20px;
}

.ec-persp-on {
    background-color: #d0d0d0;
    box-shadow: inset 0 0 0 1px #bcbcbc;
    padding-right: 5px;
}

.ec-persp-last {
    margin-left: 1px;
}

.ec-panel {
    position: relative;
    width: 361px;
    background: linear-gradient(90deg, #b5b5b5 0, #e4e4e4 14px, #f5f5f5 36px, #fff 58px);
    border-radius: 6px;
}

.ec-panel-top {
    height: 710px;
    margin-top: 3px;
}

.ec-panel-bottom {
    height: 174px;
    margin-top: 5px;
    border: 1px solid #d6d6d6;
    border-left: none;
}

.ec-winbtns {
    position: absolute;
    right: 15px;
    top: 6px;
    display: flex;
    align-items: center;
    gap: 12px;
}

.ec-winbtns svg:first-child { width: 10px; height: 6px; }
.ec-winbtns svg:last-child { width: 10px; height: 12px; }

.ec-winbtns-bar {
    top: 7px;
    right: 14px;
}

.ec-bar {
    display: flex;
    align-items: flex-start;
    height: 30px;
    padding: 5px 0 0 36.500px;
    gap: 6px;
    background: linear-gradient(90deg, rgba(130, 130, 130, 0.7) 0, transparent 44px), linear-gradient(#f1f1f1, #d9d9d9);
    border-radius: 6px 6px 0 0;
    border-bottom: 1px solid #c6c6c6;
}

.bar-ico {
    width: 16px;
    height: 16px;
    flex: none;
}

.bar-stop {
    width: 11px;
    height: 11px;
    margin: 3px 4.500px 0 0;
    background-color: #dcdcdc;
}

.bar-sep {
    flex: none;
    width: 1px;
    height: 22px;
    margin-top: -3px;
    background-color: #c9c9c9;
}

.bar-on {
    display: flex;
    align-items: center;
    gap: 5px;
    height: 22px;
    margin: -3px 0 0 -3px;
    padding: 0 3px;
    background-color: #c5c5c5;
}

.bar-caret {
    width: 0;
    height: 0;
    margin: 6px 0 0 -4px;
    border: 3px solid transparent;
    border-top: 3px solid #888;
    border-bottom: none;
}

.bar-caret-dark {
    border-top-color: #222;
}

.ec-bar-line {
    height: 2px;
    margin: 16px 4px 0 0;
    background-color: #c4c4c4;
}

.ec-status {
    flex: 1;
    position: relative;
}

.ec-sash {
    position: absolute;
    left: 72px;
    top: 9px;
    height: 16px;
    border-left: 1px dotted #8a8a8a;
}

/* paintbrush window */

.paint {
    position: absolute;
    left: 37px;
    top: 24px;
    width: 1325px;
    height: 989px;
    display: flex;
    flex-direction: column;
    background-color: #fff;
    box-shadow: 6px 0 6px rgba(0, 0, 0, 0.55);
}

.paint-title {
    position: relative;
    display: flex;
    align-items: center;
    gap: 8.500px;
    height: 23px;
    padding-left: 8px;
    background: linear-gradient(#ececec, #d3d3d3);
    border-radius: 5px 5px 0 0;
}

.light {
    width: 12px;
    height: 12px;
    border-radius: 50%;
}

.light-red { background-color: #e4564e; box-shadow: inset 0 0 0 3.500px #e4564e, inset 0 0 0 6px #8e1f1a; }
.light-yellow { background-color: #eeb32e; }
.light-green { background-color: #3dc03f; }

.paint-name {
    position: absolute;
    left: 0;
    right: -5px;
    text-align: center;
    font-size: 12.500px;
    color: #555;
}

.paint-body {
    height: 950px;
    padding-left: 8px;
    background-color: #f2f2f2;
}

.diagram {
    width: 1315px;
    height: 950px;
    background-color: #fff;
    margin-right: 2px;
}

.dg-txt text {
    font-family: "Liberation Sans", Arial, sans-serif;
    font-size: 16.400px;
    fill: #2a2a2a;
}

.dg-txt .dg-tight {
    font-size: 16.200px;
}

.dg-col text {
    text-anchor: middle;
}

.dg-box rect {
    fill: none;
    stroke: #000;
    stroke-width: 4;
}

.dg-line path {
    fill: none;
    stroke: #000;
    stroke-width: 4.500;
    stroke-linecap: round;
    stroke-linejoin: round;
}

.dg-dot rect {
    fill: #000;
}

.dg-cursor {
    stroke: #999;
    stroke-width: 1.500;
    fill: none;
}

.paint-foot {
    flex: 1;
    background: linear-gradient(#fdfdfd, #eeeeee);
}

.zoom-box {
    display: flex;
    align-items: center;
    justify-content: space-between;
    width: 81px;
    height: 16px;
    padding: 0 7px 0 6px;
    background-color: #dcdcdc;
    font-size: 12.500px;
    color: #333;
}

.zoom-box svg {
    width: 7px;
    height: 13px;
}

/* tool palette */

.palette {
    position: absolute;
    left: 26px;
    top: 58px;
    width: 73px;
    height: 377px;
    padding: 4px 0 0;
    display: flex;
    flex-direction: column;
    background-color: #f4f4f4;
    border-radius: 4px;
    box-shadow: 0 1px 6px rgba(0, 0, 0, 0.35);
}

.pal-lights {
    display: flex;
    gap: 9px;
    padding-left: 6px;
}

.pal-lights i {
    width: 10px;
    height: 10px;
    border-radius: 50%;
    background-color: #d9d9d9;
}

.pal-grid {
    display: grid;
    grid-template-columns: 28px 28px;
    grid-auto-rows: 32.800px;
    column-gap: 5px;
    justify-items: center;
    align-items: center;
    padding: 8px 0 0 6px;
}

.tool {
    width: 28px;
    height: 28px;
    filter: drop-shadow(0 2px 1px rgba(0, 0, 0, 0.18));
}

.tool-on {
    display: flex;
    align-items: center;
    justify-content: center;
    width: 32px;
    height: 32px;
    background-color: #9d9d9d;
    border: 2px solid #808080;
    border-radius: 5px;
}

.tool-t {
    font-family: "Liberation Serif", serif;
    font-size: 26px;
    line-height: 28px;
    text-align: center;
    color: #444;
}

.pal-stroke {
    margin-top: 11px;
    text-align: center;
    font-size: 10.500px;
    font-weight: 700;
    color: #555;
}

.pal-slider {
    position: relative;
    height: 3px;
    margin: 7px 7px 0;
    background-color: #cfcfcf;
}

.pal-thumb {
    position: absolute;
    left: 9px;
    top: -4px;
    width: 11px;
    height: 12px;
    background-color: #fff;
    clip-path: polygon(0 0, 100% 0, 100% 45%, 50% 100%, 0 45%);
}

.pal-ticks {
    height: 4px;
    margin: 5px 12px 0;
    background: repeating-linear-gradient(90deg, #888 0 1px, transparent 1px 6px);
}

.pal-swatch {
    position: relative;
    height: 60px;
    margin-top: 17px;
}

.sw-front {
    position: absolute;
    left: 8px;
    top: 0;
    width: 41px;
    height: 41px;
    background-color: #000;
    border-radius: 2px;
}

.sw-back {
    position: absolute;
    left: 24px;
    top: 18px;
    width: 42px;
    height: 40px;
    background-color: #fff;
    border: 1px solid #aaa;
    border-radius: 3px;
}

.sw-swap {
    position: absolute;
    left: 52px;
    top: 0;
    width: 14px;
    height: 14px;
}

/* dock */

.dock {
    position: absolute;
    left: 43px;
    top: 1013px;
    width: 1640px;
    height: 65px;
    display: flex;
    padding: 8px 0 0 4px;
    background: linear-gradient(90deg, #4e4b49 0, #62605e 50%, #5a5856 100%);
}

.dock-app {
    position: relative;
    flex: none;
    width: 53.600px;
    height: 46px;
}

.dock-app svg {
    width: 46px;
    height: 46px;
    margin: 0 auto;
}

.is-open::after {
    content: "";
    position: absolute;
    left: 25px;
    top: 51px;
    width: 4px;
    height: 4px;
    border-radius: 50%;
    background-color: #111;
}

.dock-sep {
    flex: none;
    width: 1px;
    height: 56px;
    margin: 0 11px 0 10px;
    background-color: #3a3a3a;
}

.cal-m {
    font-size: 7px;
    font-family: "Liberation Sans", sans-serif;
    text-anchor: middle;
    fill: #fff;
}

.cal-d {
    font-size: 21px;
    font-family: "Liberation Sans", sans-serif;
    text-anchor: middle;
    fill: #333;
}

.badge-n {
    font-size: 11px;
    font-family: "Liberation Sans", sans-serif;
    text-anchor: middle;
    fill: #fff;
}

.skype-s {
    font-size: 30px;
    font-weight: 700;
    font-family: "Liberation Sans", sans-serif;
    text-anchor: middle;
    fill: #1f7fc4;
}

/* channel overlay */

.subscribe {
    position: absolute;
    left: 1731px;
    top: 1010px;
    width: 142px;
    height: 29px;
    border-radius: 14px;
    background: linear-gradient(rgba(205, 70, 75, 0.9) 50%, rgba(170, 35, 40, 0.95) 50%);
    color: #f4e6e6;
    font-family: Roboto, sans-serif;
    font-size: 16.400px;
    line-height: 29px;
    text-align: center;
}
```
